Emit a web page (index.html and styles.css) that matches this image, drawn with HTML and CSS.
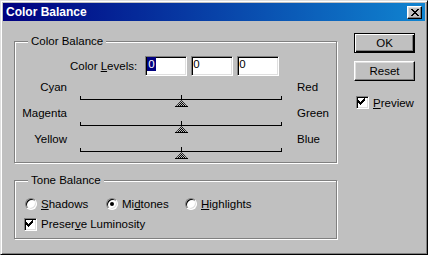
FILE: index.html
```html
<!DOCTYPE html>
<html lang="en">
<head>
    <meta charset="UTF-8">
    <title>Color Balance</title>
    <link rel="stylesheet" href="styles.css">
</head>
<body>

<div class="window">
    <div class="titlebar">
        <span class="title">Color Balance</span>
        <button class="close-btn" aria-label="Close">
            <svg width="8" height="7" viewBox="0 0 8 7">
                <path d="M0 0h2v1h-2z M6 0h2v1h-2z M1 1h2v1h-2z M5 1h2v1h-2z M2 2h4v1h-4z M3 3h2v1h-2z M2 4h4v1h-4z M1 5h2v1h-2z M5 5h2v1h-2z M0 6h2v1h-2z M6 6h2v1h-2z" fill="#000"/>
            </svg>
        </button>
    </div>

    <div class="dialog-body">
        <div class="main-col">
            <div class="group group-color">
                <div class="group-title">Color Balance</div>

                <div class="levels">
                    <span class="levels-label">Color <u>L</u>evels:</span>
                    <div class="field"><span class="sel">0</span></div>
                    <div class="field">0</div>
                    <div class="field">0</div>
                </div>

                <div class="slider-row">
                    <span class="side side-left">Cyan</span>
                    <div class="track-wrap">
                        <div class="track">
                            <div class="track-line"></div>
                            <div class="tick"></div>
                            <svg class="thumb" width="13" height="7" viewBox="0 0 13 7">
                                <defs>
                                    <pattern id="dots" width="2" height="2" patternUnits="userSpaceOnUse">
                                        <rect width="2" height="2" fill="#c0c0c0"/>
                                        <rect width="1" height="1" fill="#000"/>
                                        <rect x="1" y="1" width="1" height="1" fill="#000"/>
                                    </pattern>
                                </defs>
                                <polygon points="6.5,0 13,7 0,7" fill="url(#dots)"/>
                                <rect y="6" width="13" height="1" fill="#000"/>
                            </svg>
                        </div>
                    </div>
                    <span class="side">Red</span>
                </div>

                <div class="slider-row">
                    <span class="side side-left">Magenta</span>
                    <div class="track-wrap">
                        <div class="track">
                            <div class="track-line"></div>
                            <div class="tick"></div>
                            <svg class="thumb" width="13" height="7" viewBox="0 0 13 7">
                                <polygon points="6.5,0 13,7 0,7" fill="url(#dots)"/>
                                <rect y="6" width="13" height="1" fill="#000"/>
                            </svg>
                        </div>
                    </div>
                    <span class="side">Green</span>
                </div>

                <div class="slider-row">
                    <span class="side side-left">Yellow</span>
                    <div class="track-wrap">
                        <div class="track">
                            <div class="track-line"></div>
                            <div class="tick"></div>
                            <svg class="thumb" width="13" height="7" viewBox="0 0 13 7">
                                <polygon points="6.5,0 13,7 0,7" fill="url(#dots)"/>
                                <rect y="6" width="13" height="1" fill="#000"/>
                            </svg>
                        </div>
                    </div>
                    <span class="side">Blue</span>
                </div>
            </div>

            <div class="group group-tone">
                <div class="group-title">Tone Balance</div>
                <div class="radios">
                    <div class="radio"><span class="radio-dot"></span><span><u>S</u>hadows</span></div>
                    <div class="radio"><span class="radio-dot checked"></span><span>Mi<u>d</u>tones</span></div>
                    <div class="radio"><span class="radio-dot"></span><span><u>H</u>ighlights</span></div>
                </div>
                <div class="check-row">
                    <span class="checkbox">
                        <svg width="11" height="11" viewBox="0 0 11 11">
                            <path d="M7 1h1v1h-1z M6 2h2v1h-2z M1 3h1v1h-1z M5 3h3v1h-3z M1 4h2v1h-2z M4 4h3v1h-3z M1 5h5v1h-5z M2 6h3v1h-3z M3 7h1v1h-1z" fill="#000"/>
                        </svg>
                    </span>
                    <span>Preser<u>v</u>e Luminosity</span>
                </div>
            </div>
        </div>

        <div class="side-col">
            <button class="btn btn-default">OK</button>
            <button class="btn btn-reset">Reset</button>
            <div class="check-row preview">
                <span class="checkbox">
                    <svg width="11" height="11" viewBox="0 0 11 11">
                        <path d="M7 1h1v1h-1z M6 2h2v1h-2z M1 3h1v1h-1z M5 3h3v1h-3z M1 4h2v1h-2z M4 4h3v1h-3z M1 5h5v1h-5z M2 6h3v1h-3z M3 7h1v1h-1z" fill="#000"/>
                    </svg>
                </span>
                <span><u>P</u>review</span>
            </div>
        </div>
    </div>
</div>

</body>
</html>
```

FILE: styles.css
```css
body {
    margin: 0;
    background-color: #c0c0c0;
    font-family: "Liberation Sans", Arial, sans-serif;
    font-size: 11.5px;
    color: #000;
}

.window {
    width: 428px;
    height: 255px;
    box-sizing: border-box;
    padding: 2px;
    border: 1px solid;
    border-color: #dfdfdf #000 #000 #dfdfdf;
    box-shadow: inset 1px 1px #fff, inset -1px -1px #808080;
}

.titlebar {
    height: 18px;
    display: flex;
    align-items: center;
    justify-content: space-between;
    padding: 0 3px;
    background: linear-gradient(to right, #000080, #1084d0);
    color: #fff;
}

.title {
    font-size: 12px;
    font-weight: bold;
}

.close-btn {
    width: 15px;
    height: 13px;
    padding: 0;
    display: flex;
    align-items: center;
    justify-content: center;
    background-color: #c0c0c0;
    border: 1px solid;
    border-color: #fff #000 #000 #fff;
    box-shadow: inset -1px -1px #808080, inset 1px 1px #dfdfdf;
}

.close-btn svg {
    display: block;
}

.dialog-body {
    display: flex;
    padding-left: 11px;
}

.main-col {
    width: 323px;
    padding-top: 20px;
}

.group {
    border: 1px solid #808080;
    box-shadow: inset 1px 1px #fff, 1px 1px #fff;
}

.group-title {
    display: table;
    margin: -8px 0 0 13px;
    padding: 0 3px;
    line-height: 14px;
    background-color: #c0c0c0;
}

.group-color {
    padding-bottom: 4px;
}

.levels {
    display: flex;
    align-items: center;
    height: 20px;
    margin: 8px 0 4px 55px;
}

.levels-label {
    margin-right: 8px;
}

.field {
    width: 42px;
    height: 20px;
    box-sizing: border-box;
    margin-right: 4px;
    padding-left: 1px;
    line-height: 14px;
    background-color: #fff;
    border: 1px solid;
    border-color: #808080 #fff #fff #808080;
    box-shadow: inset 1px 1px #000, inset -1px -1px #dfdfdf;
}

.sel {
    display: inline-block;
    padding: 0 1px;
    background-color: #000080;
    color: #fff;
}

.slider-row {
    display: flex;
    height: 26px;
}

.side {
    line-height: 14px;
}

.side-left {
    width: 52px;
    text-align: right;
}

.track-wrap {
    width: 230px;
    box-sizing: border-box;
    padding: 16px 0 0 13px;
}

.track {
    position: relative;
    width: 202px;
    height: 11px;
}

.track-line {
    height: 3px;
    border: 1px solid #000;
    border-top: none;
}

.tick {
    position: absolute;
    left: 101px;
    top: -1px;
    width: 1px;
    height: 4px;
    background-color: #000;
}

.thumb {
    position: absolute;
    left: 95px;
    top: 4px;
    display: block;
}

.group-tone {
    margin-top: 17px;
    padding-bottom: 6px;
}

.radios {
    display: grid;
    grid-template-columns: 81px 79px auto;
    height: 16px;
    margin-top: 9px;
    padding-left: 10px;
}

.radio {
    display: flex;
    align-items: center;
    gap: 4px;
}

.radio-dot {
    width: 12px;
    height: 12px;
    box-sizing: border-box;
    display: flex;
    align-items: center;
    justify-content: center;
    border-radius: 50%;
    background-color: #fff;
    border: 1px solid;
    border-color: #808080 #fff #fff #808080;
    box-shadow: inset 1px 1px #000, inset -1px -1px #dfdfdf;
}

.radio-dot.checked::after {
    content: "";
    width: 4px;
    height: 4px;
    border-radius: 50%;
    background-color: #000;
}

.check-row {
    display: flex;
    align-items: center;
    gap: 4px;
    height: 16px;
    margin-top: 4px;
    padding-left: 9px;
}

.checkbox {
    width: 13px;
    height: 13px;
    box-sizing: border-box;
    background-color: #fff;
    border: 1px solid;
    border-color: #808080 #fff #fff #808080;
    box-shadow: inset 1px 1px #000, inset -1px -1px #dfdfdf;
}

.checkbox svg {
    display: block;
}

.side-col {
    display: flex;
    flex-direction: column;
    align-items: flex-start;
    margin-left: 17px;
    padding-top: 12px;
}

.btn {
    width: 61px;
    height: 20px;
    padding: 0;
    font: inherit;
    color: #000;
    background-color: #c0c0c0;
}

.btn-default {
    border: 1px solid #000;
    box-shadow: inset 1px 1px #fff, inset -1px -1px #000, inset -2px -2px #808080;
}

.btn-reset {
    margin-top: 8px;
    border: 1px solid;
    border-color: #fff #000 #000 #fff;
    box-shadow: inset -1px -1px #808080, inset 1px 1px #dfdfdf;
}

.preview {
    height: 13px;
    margin-top: 15px;
    padding-left: 2px;
}
```
